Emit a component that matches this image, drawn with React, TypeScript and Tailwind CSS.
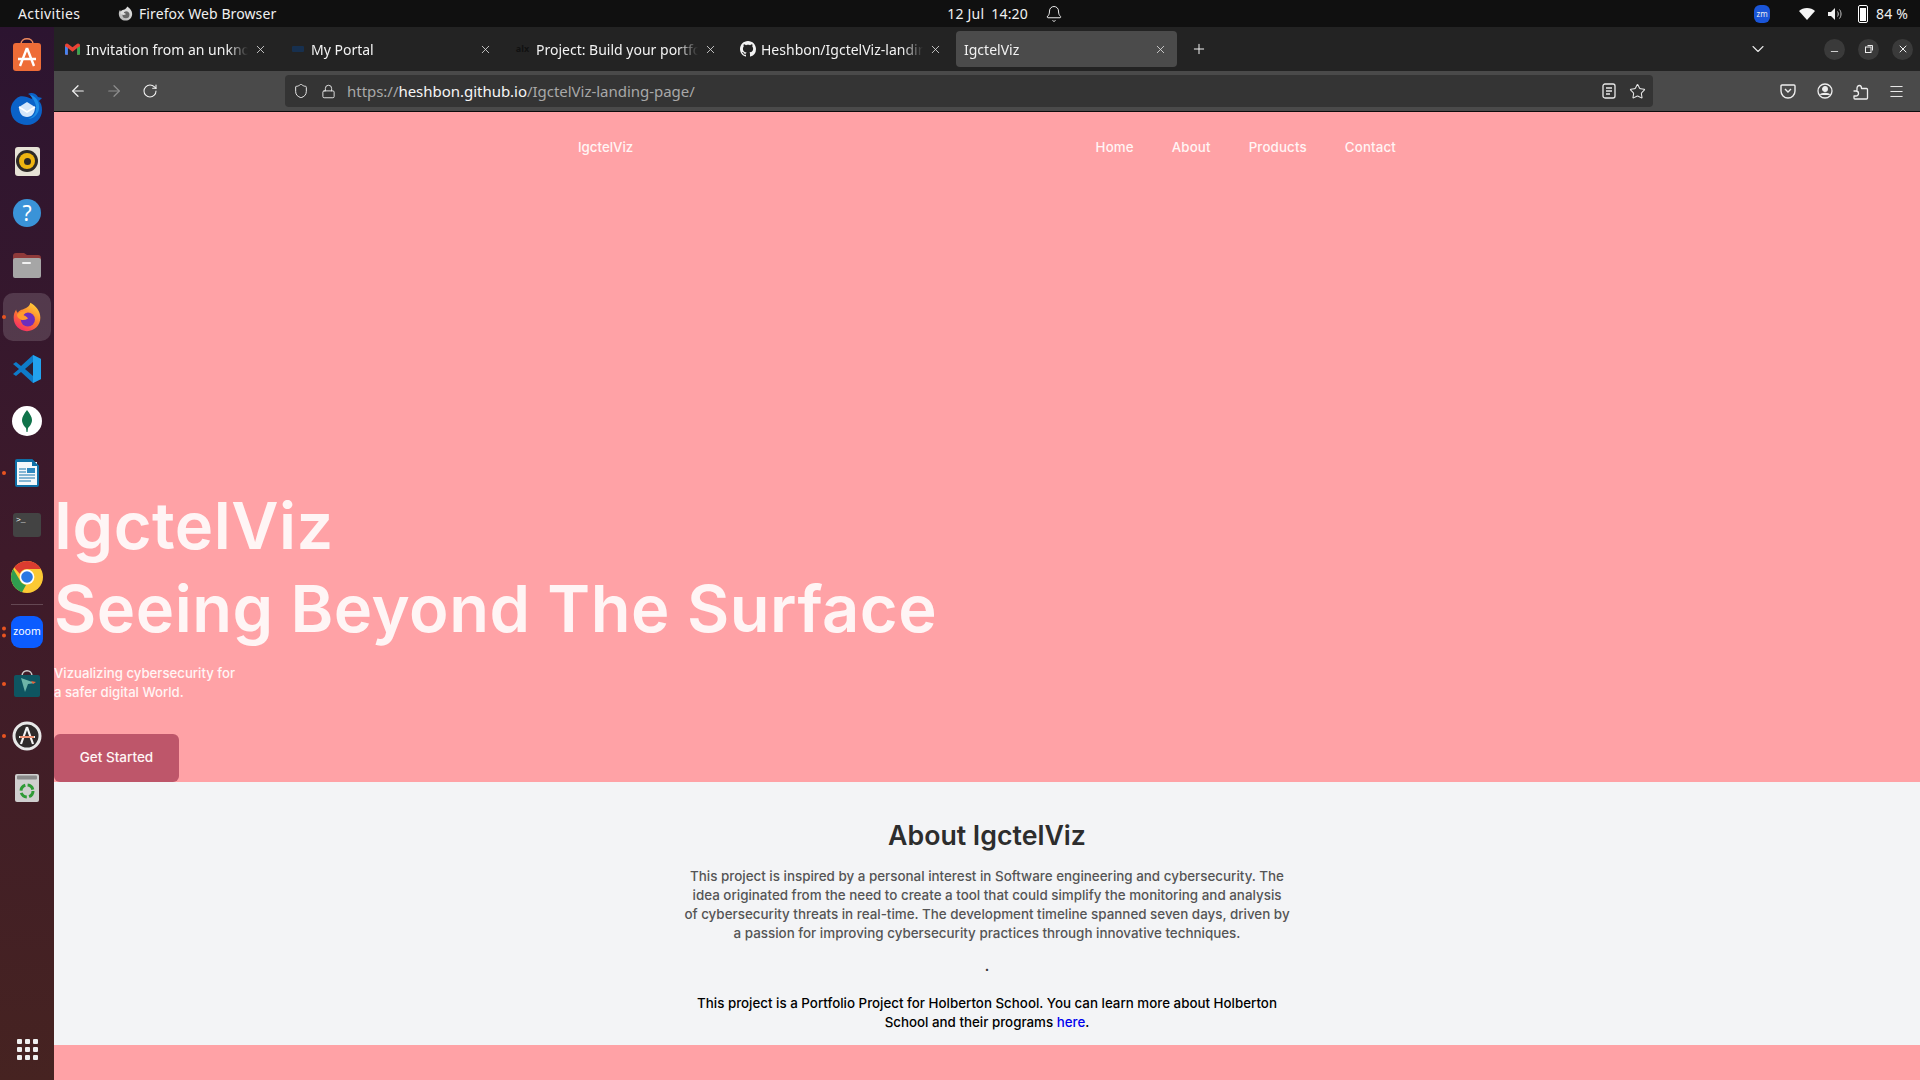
import { ArrowLeft, ArrowRight, RotateCw, Shield, Lock, Star, Menu, X, Plus, ChevronDown, Minus, Bell } from "lucide-react";

const shellFont = "font-['Noto_Sans',sans-serif]";
const pageFont = "font-['Inter',sans-serif]";

function FirefoxIcon({ size = 36, mono = false }: { size?: number; mono?: boolean }) {
  return (
    <svg width={size} height={size} viewBox="0 0 36 36">
      <defs>
        <linearGradient id={mono ? "ffm" : "ffc"} x1="0.8" y1="0" x2="0.2" y2="1">
          <stop offset="0" stopColor={mono ? "#e5e5e5" : "#ffd43a"} />
          <stop offset="0.5" stopColor={mono ? "#cfcfcf" : "#ff7a2b"} />
          <stop offset="1" stopColor={mono ? "#b5b5b5" : "#f5246e"} />
        </linearGradient>
      </defs>
      <path d="M22 1c7 4 12 10 12 18 0 9-7 16-16 16S2 28 2 19c0-4 1-7 3-10 0 2 1 3 2 4 1-2 4-4 6-4 3-1 8-3 9-8z" fill={`url(#${mono ? "ffm" : "ffc"})`} />
      <circle cx="19" cy="21" r="8.500" fill={mono ? "#666" : "#6f2dbd"} />
      <path d="M6 15c3-4 9-5 13-3-3 1-5 3-5 4 3 1 5 3 5 4-4 2-8 2-10 0-2-1-3-3-3-5z" fill={mono ? "#ddd" : "#ff9a2e"} />
    </svg>
  );
}

function DockItem({ children, dots = 0, active = false }: { children: React.ReactNode; dots?: number; active?: boolean }) {
  return (
    <div className="relative flex h-[52px] w-[48px] items-center justify-center">
      {active && <div className="absolute inset-x-0 top-[2px] bottom-[2px] rounded-[10px] bg-white/15" />}
      {dots > 0 && (
        <div className="absolute left-[-1px] top-1/2 flex -translate-y-1/2 flex-col gap-[3px]">
          {Array.from({ length: dots }).map((_, i) => (
            <span key={i} className="h-[4px] w-[4px] rounded-full bg-[#e95420]" />
          ))}
        </div>
      )}
      <div className="relative flex items-center justify-center">{children}</div>
    </div>
  );
}

function Dock() {
  return (
    <aside className="flex w-[54px] shrink-0 flex-col items-center bg-gradient-to-b from-[#2c1430] via-[#3e1a2a] to-[#462321] pt-[4px]">
      <DockItem>
        <svg className="-translate-y-[2px]" width="32" height="36" viewBox="0 0 32 36">
          <path d="M10 7c0-7 12-7 12 0" fill="none" stroke="#f08a5d" strokeWidth="1.5" />
          <rect x="2" y="6" width="28" height="28" rx="3" fill="#ee6c37" />
          <path d="M16 11 9 29M16 11l7 18M7 22h18" stroke="#fff" strokeWidth="2.400" fill="none" />
        </svg>
      </DockItem>
      <DockItem>
        <svg width="36" height="34" viewBox="0 0 36 34">
          <path d="M8 6C3 10 1 15 2 20c1 8 8 13 16 13 9 0 15-7 15-15 0-4-1-7-3-9l3-3-4-1c-2-4-7-5-10-3 3 1 4 3 4 5C17 4 11 3 8 6z" fill="#0b62c8" />
          <path d="M21 3c6 1 10 7 9 14-1 6-6 10-11 10 6-2 9-7 8-13-1-4-3-8-6-11z" fill="#1f8de6" />
          <path d="M10 15l8-5 8 5c0 6-3 10-8 10s-8-4-8-10z" fill="#d5e6fa" />
          <path d="M10 15l8 5 8-5" fill="none" stroke="#fff" strokeWidth="1.500" />
        </svg>
      </DockItem>
      <DockItem>
        <div className="flex h-[29px] w-[25px] items-center justify-center rounded-[3px] bg-[#e6e2d6]">
          <div className="flex h-[22px] w-[22px] items-center justify-center rounded-full bg-[#2d2a27]">
            <div className="flex h-[16px] w-[16px] items-center justify-center rounded-full bg-[#eeb511]">
              <div className="h-[7px] w-[7px] rounded-full bg-[#2d2a27]" />
            </div>
          </div>
        </div>
      </DockItem>
      <DockItem>
        <div className={`flex h-[28px] w-[28px] items-center justify-center rounded-full bg-[#3a93d8] text-[21px] leading-none text-white ${shellFont}`}>?</div>
      </DockItem>
      <DockItem>
        <svg width="32" height="28" viewBox="0 0 32 28">
          <path d="M2 5c0-2 1-3 3-3h8l3 2h11c2 0 3 1 3 3v6H2z" fill="#8f3a3a" />
          <rect x="2" y="7" width="28" height="20" rx="2" fill="#a6a6a6" />
          <rect x="11" y="11" width="9" height="2" rx="1" fill="#f2f2f2" />
        </svg>
      </DockItem>
      <DockItem active dots={1}>
        <FirefoxIcon size={30} />
      </DockItem>
      <DockItem>
        <svg width="30" height="30" viewBox="0 0 30 30">
          <path d="M21 1l8 4v20l-8 4L9 18l-5 4-3-2 6-5-6-5 3-2 5 4z" fill="#0e7bc9" />
          <path d="M21 8v14l-8-7z" fill="#2c2036" />
          <path d="M21 1l8 4v20l-8 4z" fill="#22a2ee" />
        </svg>
      </DockItem>
      <DockItem>
        <div className="flex h-[30px] w-[30px] items-center justify-center rounded-full bg-white">
          <svg width="12" height="22" viewBox="0 0 12 22">
            <path d="M6 0c3 4 5 7 5 10 0 4-3 7-4 8l-.5 4h-1L5 18c-1-1-4-4-4-8 0-3 2-6 5-10z" fill="#10734a" />
          </svg>
        </div>
      </DockItem>
      <DockItem dots={1}>
        <svg width="26" height="30" viewBox="0 0 26 30">
          <path d="M1 3a2 2 0 0 1 2-2h15l7 7v19a2 2 0 0 1-2 2H3a2 2 0 0 1-2-2z" fill="#0f6fa6" />
          <rect x="3" y="4" width="20" height="23" fill="#f4f8fb" />
          <path d="M18 1l7 7h-7z" fill="#0f6fa6" />
          <path d="M5 11h7M5 14h7M5 17h16M5 20h16M5 23h12" stroke="#1474ad" strokeWidth="1.200" />
          <rect x="13" y="10" width="8" height="5" fill="#2e88c0" />
        </svg>
      </DockItem>
      <DockItem>
        <div className="flex h-[24px] w-[28px] flex-col rounded-[3px] bg-[#434343] px-[3px] py-[2px] font-['Liberation_Mono',monospace] text-[8px] leading-[9px] text-white">
          <span>&gt;_</span>
        </div>
      </DockItem>
      <DockItem>
        <svg width="32" height="32" viewBox="0 0 32 32">
          <circle cx="16" cy="16" r="16" fill="#fcc934" />
          <path d="M16 0a16 16 0 0 1 13.900 8H16a8 8 0 0 0-7.300 4.700L3.200 6.500A16 16 0 0 1 16 0z" fill="#db3c30" />
          <path d="M2.200 8 9 19.500a8 8 0 0 0 6 4.400L11 31.200A16 16 0 0 1 2.200 8z" fill="#2f9e4f" />
          <circle cx="16" cy="16" r="7.400" fill="#fff" />
          <circle cx="16" cy="16" r="5.800" fill="#2a78e4" />
        </svg>
      </DockItem>
      <div className="my-[1px] h-px w-[32px] bg-white/20" />
      <DockItem dots={2}>
        <div className={`flex h-[32px] w-[32px] items-center justify-center rounded-[9px] bg-[#0b5cff] text-[10.500px] text-white ${shellFont}`}>zoom</div>
      </DockItem>
      <DockItem dots={1}>
        <svg width="28" height="30" viewBox="0 0 28 30">
          <path d="M9 7c0-7 10-7 10 0" fill="none" stroke="#cfcfcf" strokeWidth="1.400" />
          <rect x="1" y="6" width="26" height="22" rx="2" fill="#0e5561" />
          <path d="M8 9l14 5-7 1-3 8z" fill="#6db5a8" />
          <path d="M18 12l5 1-3 2z" fill="#e8633a" />
        </svg>
      </DockItem>
      <DockItem dots={1}>
        <svg width="30" height="30" viewBox="0 0 30 30">
          <circle cx="15" cy="15" r="13" fill="#2e2a2a" stroke="#e8e8e8" strokeWidth="3" />
          <path d="M15 6 9 23M15 6l6 17M7 16h16" stroke="#f4f4f4" strokeWidth="2.200" fill="none" />
          <path d="M8 16h14" stroke="#e95420" strokeWidth="1.200" />
        </svg>
      </DockItem>
      <DockItem>
        <svg width="26" height="30" viewBox="0 0 26 30">
          <rect x="1" y="1" width="24" height="28" rx="2" fill="#cfcfcf" />
          <rect x="3" y="2.500" width="20" height="4" rx="1" fill="#8a8a8a" />
          <circle cx="13" cy="18" r="6" fill="none" stroke="#2e9a36" strokeWidth="3" strokeDasharray="7 2.400" />
        </svg>
      </DockItem>
      <div className="mt-auto mb-[20px] grid grid-cols-3 gap-[3px]">
        {Array.from({ length: 9 }).map((_, i) => (
          <span key={i} className="h-[5px] w-[5px] rounded-[1px] bg-[#f0f0f0]" />
        ))}
      </div>
    </aside>
  );
}

function TopBar() {
  return (
    <header className={`flex h-[27px] shrink-0 items-center bg-[#101010] text-[14px] text-[#f0f0f0] ${shellFont}`}>
      <span className="ml-[18px] w-[99px] tracking-[0.4px]">Activities</span>
      <span className="mr-[6px] flex w-[16px] justify-center"><FirefoxIcon size={15} mono /></span>
      <span className="tracking-[0.1px]">Firefox Web Browser</span>
      <span className="ml-[671px] tracking-[0.2px]">12 Jul</span>
      <span className="ml-[7px] tracking-[0.2px]">14:20</span>
      <Bell size={18} strokeWidth={1.3} className="ml-[17px]" />
      <span className="ml-[691px] flex h-[18px] w-[16px] items-center justify-center rounded-[6px] bg-[#1a55d8] text-[8px] leading-none">zm</span>
      <svg className="ml-[29px]" width="16" height="14" viewBox="0 0 16 14"><path d="M8 13 0 4c4-4 12-4 16 0z" fill="#f5f5f5" /></svg>
      <svg className="ml-[12px]" width="16" height="16" viewBox="0 0 16 16" fill="none">
        <path d="M1 6h3l4-4v12l-4-4H1z" fill="#f0f0f0" />
        <path d="M10.500 5.500c1 1.500 1 3.500 0 5M12.500 3.500c2 2.500 2 6.500 0 9" stroke="#c8c8c8" strokeWidth="1" />
      </svg>
      <span className="ml-[15px] flex h-[18px] w-[10px] items-end rounded-[2px] border border-white p-px"><span className="h-[13px] w-full bg-white" /></span>
      <span className="ml-[8px] tracking-[0.2px]">84 %</span>
    </header>
  );
}

function Tab({ title, icon, active = false }: { title: string; icon?: React.ReactNode; active?: boolean }) {
  return (
    <div className={`relative flex h-[36px] w-[221px] shrink-0 items-center rounded-[4px] pl-[8px] pr-[10px] text-[14px] ${active ? "bg-[#4b4b4b]" : ""}`}>
      {icon && <span className="mr-[5px] flex w-[17px] shrink-0 justify-center">{icon}</span>}
      <span className="min-w-0 flex-1 overflow-hidden whitespace-nowrap text-[#f2f2f2] [mask-image:linear-gradient(to_left,transparent,black_20px)]">{title}</span>
      <X size={13} strokeWidth={1.5} className="ml-[6px] shrink-0 text-[#e0e0e0]" />
    </div>
  );
}

function TabBar() {
  return (
    <div className={`flex h-[44px] shrink-0 items-center bg-[#232323] pl-[2px] ${shellFont}`}>
      <div className="flex gap-[4px]">
        <Tab
          title="Invitation from an unknown"
          icon={
            <svg width="15" height="12" viewBox="0 0 16 12">
              <path d="M0 2v9a1 1 0 0 0 1 1h2V5l5 4 5-4v7h2a1 1 0 0 0 1-1V2a2 2 0 0 0-3-1.500L8 4 3 .5A2 2 0 0 0 0 2z" fill="#ea4335" />
              <path d="M0 3v8a1 1 0 0 0 1 1h2V5z" fill="#4285f4" />
              <path d="M16 3v8a1 1 0 0 1-1 1h-2V5z" fill="#34a853" />
            </svg>
          }
        />
        <Tab title="My Portal" icon={<span className="h-[6px] w-[12px] rounded-[1px] bg-[#17304f]" />} />
        <Tab title="Project: Build your portfolio" icon={<span className="text-[9px] font-bold text-[#111]">alx</span>} />
        <Tab
          title="Heshbon/IgctelViz-landing"
          icon={
            <svg width="16" height="16" viewBox="0 0 16 16" fill="#f2f2f2">
              <path d="M8 0C3.580 0 0 3.580 0 8c0 3.540 2.290 6.530 5.470 7.590.4.07.55-.17.55-.38 0-.19-.01-.82-.01-1.490-2.010.37-2.530-.49-2.690-.94-.09-.23-.48-.94-.82-1.130-.28-.15-.68-.52-.01-.53.63-.01 1.080.58 1.230.82.72 1.210 1.870.87 2.330.66.07-.52.28-.87.51-1.070-1.780-.2-3.640-.89-3.640-3.950 0-.87.31-1.590.82-2.150-.08-.2-.36-1.020.08-2.120 0 0 .67-.21 2.200.82.64-.18 1.320-.27 2-.27s1.360.09 2 .27c1.530-1.040 2.200-.82 2.200-.82.44 1.100.16 1.920.08 2.120.51.56.82 1.270.82 2.150 0 3.070-1.870 3.750-3.650 3.950.29.25.54.73.54 1.480 0 1.070-.01 1.930-.01 2.200 0 .21.15.46.55.38A8.010 8.010 0 0 0 16 8c0-4.420-3.580-8-8-8z" />
            </svg>
          }
        />
        <Tab title="IgctelViz" active />
      </div>
      <Plus size={16} strokeWidth={1.5} className="ml-[14px] text-[#f2f2f2]" />
      <ChevronDown size={20} strokeWidth={1.3} className="ml-[541px] text-[#e8e8e8]" />
      <div className="ml-[56px] flex gap-[13px]">
        <span className="flex h-[21px] w-[21px] items-center justify-center rounded-full bg-[#3a3a3a]"><Minus size={11} strokeWidth={1.8} className="translate-y-[2px] text-[#eee]" /></span>
        <span className="flex h-[21px] w-[21px] items-center justify-center rounded-full bg-[#3a3a3a]">
          <svg width="10" height="10" viewBox="0 0 10 10" fill="none" stroke="#eee" strokeWidth="1">
            <rect x="1.500" y="3" width="5.500" height="5.500" />
            <path d="M3.500 1.500H8.500V6.500" />
          </svg>
        </span>
        <span className="flex h-[21px] w-[21px] items-center justify-center rounded-full bg-[#3a3a3a]"><X size={12} strokeWidth={2} className="text-[#eee]" /></span>
      </div>
    </div>
  );
}

function UrlBar() {
  return (
    <div className={`flex h-[41px] shrink-0 items-center border-b border-[#0c0c0c] bg-[#4a4a4a] ${shellFont}`}>
      <ArrowLeft size={18} strokeWidth={1.6} className="ml-[15px] text-[#f2f2f2]" />
      <ArrowRight size={18} strokeWidth={1.6} className="ml-[18px] text-[#8e8e8e]" />
      <RotateCw size={16} strokeWidth={1.6} className="ml-[19px] text-[#f2f2f2]" />
      <div className="ml-[127px] flex h-[32px] w-[1368px] items-center rounded-[4px] bg-[#343434] text-[15px]">
        <Shield size={16} strokeWidth={1.5} className="ml-[8px] text-[#e8e8e8]" />
        <Lock size={15} strokeWidth={1.5} className="ml-[12px] text-[#e8e8e8]" />
        <span className="ml-[11px] tracking-[-0.03px] text-[#a8a8a8]">https://<span className="text-[#f6f6f6]">heshbon.github.io</span>/IgctelViz-landing-page/</span>
        <svg className="ml-auto mr-[13px]" width="14" height="16" viewBox="0 0 14 16" fill="none" stroke="#e8e8e8" strokeWidth="1.300">
          <rect x="1" y="1" width="12" height="14" rx="2" />
          <path d="M4 5h6M4 8h6M4 11h4" />
        </svg>
        <Star size={17} strokeWidth={1.5} className="mr-[7px] text-[#e8e8e8]" />
      </div>
      <svg className="ml-[127px]" width="16" height="16" viewBox="0 0 16 16" fill="none" stroke="#eee" strokeWidth="1.400">
        <path d="M2 2h12a1 1 0 0 1 1 1v5a7 7 0 0 1-14 0V3a1 1 0 0 1 1-1z" />
        <path d="M5 6l3 3 3-3" />
      </svg>
      <svg className="ml-[21px]" width="16" height="16" viewBox="0 0 16 16" fill="none" stroke="#eee" strokeWidth="1.300">
        <circle cx="8" cy="8" r="7" />
        <circle cx="8" cy="6" r="2.300" fill="#eee" />
        <path d="M3.500 12c1-2 8-2 9 0" fill="#eee" />
      </svg>
      <svg className="ml-[19px]" width="17" height="17" viewBox="0 0 17 17" fill="none" stroke="#eee" strokeWidth="1.300" strokeLinejoin="round">
        <path d="M2 8h3V5.500C5 3.500 6 2.500 7.500 2.500S9.500 4 9.500 5.500H14.500a1 1 0 0 1 1 1V15a1 1 0 0 1-1 1H3a1 1 0 0 1-1-1v-2h2a1.500 1.500 0 0 0 0-5z" />
      </svg>
      <Menu size={17} strokeWidth={1.4} className="ml-[19px] text-[#eee]" />
    </div>
  );
}

function Page() {
  return (
    <main className={`flex min-w-0 flex-1 flex-col overflow-hidden bg-[#ffa2a6] ${pageFont}`}>
      <section className="flex h-[670px] shrink-0 flex-col bg-[#ffa2a6] text-[#fff5f5]">
        <nav className="mx-auto mt-[25px] flex w-[818px] items-center justify-between text-[13.300px] font-medium leading-5">
          <a>IgctelViz</a>
          <ul className="flex gap-[38px] tracking-[0.15px]">
            <li>Home</li>
            <li>About</li>
            <li>Products</li>
            <li>Contact</li>
          </ul>
        </nav>
        <div className="mt-auto">
          <h1 className="text-[65px] font-semibold leading-[83px] tracking-[0.5px]">
            IgctelViz
            <br />
            Seeing Beyond The Surface
          </h1>
          <p className="mt-[14px] text-[13.200px] font-medium leading-[19px]">
            Vizualizing cybersecurity for
            <br />
            a safer digital World.
          </p>
          <button className="mt-[32px] flex h-[48px] w-[125px] items-center justify-center rounded-[6px] bg-[#be566a] pb-[2px] text-[13.500px] font-medium text-[#fff5f5]">
            Get Started
          </button>
        </div>
      </section>
      <section className="flex h-[263px] shrink-0 flex-col items-center bg-[#f3f4f6] pt-[35px] text-center">
        <h2 className="text-[26.700px] font-semibold leading-[36px] text-[#2d2d2d]">About IgctelViz</h2>
        <p className="mt-[14px] w-[640px] text-[13.400px] font-medium leading-[19px] text-[#555]">
          This project is inspired by a personal interest in Software engineering and cybersecurity. The
          <br />
          idea originated from the need to create a tool that could simplify the monitoring and analysis
          <br />
          of cybersecurity threats in real-time. The development timeline spanned seven days, driven by
          <br />
          a passion for improving cybersecurity practices through innovative techniques.
        </p>
        <p className="mt-[14px] text-[13.400px] font-bold leading-[19px] text-[#333]">.</p>
        <p className="mt-[18px] w-[600px] text-[13.350px] font-medium leading-[19px] text-black">
          This project is a Portfolio Project for Holberton School. You can learn more about Holberton School and their programs <a className="text-[#0000ee]">here</a>.
        </p>
      </section>
    </main>
  );
}

export default function App() {
  return (
    <div className="flex h-[1080px] w-[1920px] flex-col overflow-hidden">
      <TopBar />
      <div className="flex min-h-0 flex-1">
        <Dock />
        <div className="flex min-w-0 flex-1 flex-col">
          <TabBar />
          <UrlBar />
          <Page />
        </div>
      </div>
    </div>
  );
}
